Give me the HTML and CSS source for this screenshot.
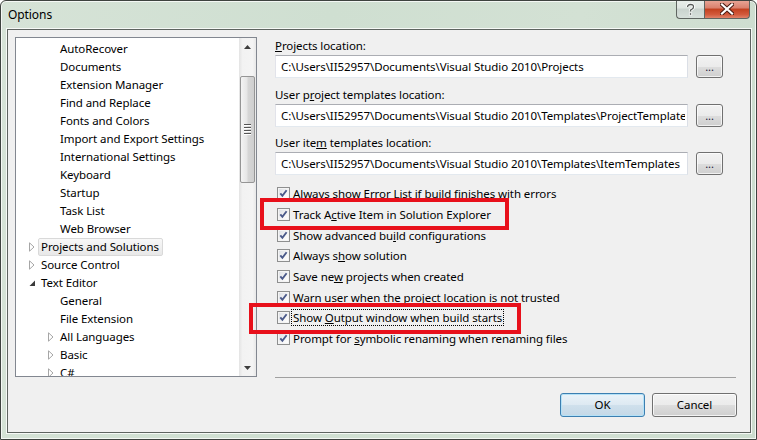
FILE: index.html
```html
<!DOCTYPE html>
<html>
<head>
<meta charset="utf-8">
<link rel="stylesheet" href="styles.css">
</head>
<body>
<div class="window">
  <div class="titlebar">
    <div class="title">Options</div>
    <div class="caption-btns">
      <div class="cap-help"><svg width="11" height="13" viewBox="0 0 11 13"><path d="M2.5 4 Q2.5 1.5 5.5 1.5 Q8.5 1.5 8.5 4 Q8.5 5.5 6.5 6.5 L5.5 7.2 L5.5 8.5" fill="none" stroke="#fff" stroke-width="3"/><path d="M2.5 4 Q2.5 1.5 5.5 1.5 Q8.5 1.5 8.5 4 Q8.5 5.5 6.5 6.5 L5.5 7.2 L5.5 8.5" fill="none" stroke="#555a57" stroke-width="1.3"/><rect x="4.3" y="9.8" width="2.4" height="2.4" fill="#555a57" stroke="#fff" stroke-width="0.8"/></svg></div>
      <div class="cap-close"><svg width="14" height="12" viewBox="0 0 14 12"><path d="M2 1.5 L12 10.5 M12 1.5 L2 10.5" stroke="#4a1b12" stroke-width="4.2" stroke-linecap="square"/><path d="M2 1.5 L12 10.5 M12 1.5 L2 10.5" stroke="#fff" stroke-width="2.2" stroke-linecap="square"/></svg></div>
    </div>
  </div>
  <div class="client">
    <div class="main">
      <div class="tree">
        <div class="tree-items">
          <div class="node l1"><span class="exp"></span><span class="lbl">AutoRecover</span></div>
          <div class="node l1"><span class="exp"></span><span class="lbl">Documents</span></div>
          <div class="node l1"><span class="exp"></span><span class="lbl">Extension Manager</span></div>
          <div class="node l1"><span class="exp"></span><span class="lbl">Find and Replace</span></div>
          <div class="node l1"><span class="exp"></span><span class="lbl">Fonts and Colors</span></div>
          <div class="node l1"><span class="exp"></span><span class="lbl">Import and Export Settings</span></div>
          <div class="node l1"><span class="exp"></span><span class="lbl">International Settings</span></div>
          <div class="node l1"><span class="exp"></span><span class="lbl">Keyboard</span></div>
          <div class="node l1"><span class="exp"></span><span class="lbl">Startup</span></div>
          <div class="node l1"><span class="exp"></span><span class="lbl">Task List</span></div>
          <div class="node l1"><span class="exp"></span><span class="lbl">Web Browser</span></div>
          <div class="node l0"><span class="exp"><svg width="6" height="10" viewBox="0 0 6 10"><path d="M0.5 0.8 L5 5 L0.5 9.2 Z" fill="#fff" stroke="#a6a6a6" stroke-width="1"/></svg></span><span class="lbl sel">Projects and Solutions</span></div>
          <div class="node l0"><span class="exp"><svg width="6" height="10" viewBox="0 0 6 10"><path d="M0.5 0.8 L5 5 L0.5 9.2 Z" fill="#fff" stroke="#a6a6a6" stroke-width="1"/></svg></span><span class="lbl">Source Control</span></div>
          <div class="node l0"><span class="exp"><svg width="7" height="7" viewBox="0 0 7 7"><path d="M6 0.5 L6 6 L0.5 6 Z" fill="#3a3a3a"/></svg></span><span class="lbl">Text Editor</span></div>
          <div class="node l1"><span class="exp"></span><span class="lbl">General</span></div>
          <div class="node l1"><span class="exp"></span><span class="lbl">File Extension</span></div>
          <div class="node l1"><span class="exp"><svg width="6" height="10" viewBox="0 0 6 10"><path d="M0.5 0.8 L5 5 L0.5 9.2 Z" fill="#fff" stroke="#a6a6a6" stroke-width="1"/></svg></span><span class="lbl">All Languages</span></div>
          <div class="node l1"><span class="exp"><svg width="6" height="10" viewBox="0 0 6 10"><path d="M0.5 0.8 L5 5 L0.5 9.2 Z" fill="#fff" stroke="#a6a6a6" stroke-width="1"/></svg></span><span class="lbl">Basic</span></div>
          <div class="node l1"><span class="exp"><svg width="6" height="10" viewBox="0 0 6 10"><path d="M0.5 0.8 L5 5 L0.5 9.2 Z" fill="#fff" stroke="#a6a6a6" stroke-width="1"/></svg></span><span class="lbl">C#</span></div>
        </div>
        <div class="vscroll">
          <div class="sb-btn"><svg width="7" height="4" viewBox="0 0 7 4"><path d="M3.5 0 L7 4 L0 4 Z" fill="#3d3d3d"/></svg></div>
          <div class="sb-track">
            <div class="sb-thumb"><div class="grip"><i></i><i></i><i></i><i></i></div></div>
          </div>
          <div class="sb-btn"><svg width="7" height="4" viewBox="0 0 7 4"><path d="M0 0 L7 0 L3.5 4 Z" fill="#3d3d3d"/></svg></div>
        </div>
      </div>
      <div class="panel">
        <div class="field">
          <div class="flabel"><u>P</u>rojects location:</div>
          <div class="frow"><div class="textbox"><span class="tbtext">C:\Users\II52957\Documents\Visual Studio 2010\Projects</span></div><div class="browse">...</div></div>
        </div>
        <div class="field">
          <div class="flabel">User p<u>r</u>oject templates location:</div>
          <div class="frow"><div class="textbox"><span class="tbtext">C:\Users\II52957\Documents\Visual Studio 2010\Templates\ProjectTemplates</span></div><div class="browse">...</div></div>
        </div>
        <div class="field">
          <div class="flabel">User ite<u>m</u> templates location:</div>
          <div class="frow"><div class="textbox"><span class="tbtext">C:\Users\II52957\Documents\Visual Studio 2010\Templates\ItemTemplates</span></div><div class="browse">...</div></div>
        </div>
        <div class="checks">
          <div class="chk"><span class="box"></span><span class="ctext">Always show <u>E</u>rror List if build finishes with errors</span></div>
          <div class="chk"><span class="box"></span><span class="ctext">Track A<u>c</u>tive Item in Solution Explorer</span></div>
          <div class="chk"><span class="box"></span><span class="ctext">Show advanced bu<u>i</u>ld configurations</span></div>
          <div class="chk"><span class="box"></span><span class="ctext">Always s<u>h</u>ow solution</span></div>
          <div class="chk"><span class="box"></span><span class="ctext">Save ne<u>w</u> projects when created</span></div>
          <div class="chk"><span class="box"></span><span class="ctext">Warn user when the project location is not trusted</span></div>
          <div class="chk"><span class="box"></span><span class="ctext focus">Show <u>O</u>utput window when build starts</span></div>
          <div class="chk"><span class="box"></span><span class="ctext">Prompt for <u>s</u>ymbolic renaming when renaming files</span></div>
        </div>
      </div>
    </div>
    <div class="footer">
      <div class="btn default">OK</div>
      <div class="btn">Cancel</div>
    </div>
  </div>
  <div class="mark mark1"></div>
  <div class="mark mark2"></div>
</div>
</body>
</html>
```
FILE: styles.css
```css
html, body {
  margin: 0;
  padding: 0;
  background: #fff;
}
body {
  font-family: "Noto Sans", "Open Sans", sans-serif;
  font-size: 11.5px;
  letter-spacing: -0.08px;
  color: #000;
}
.window {
  position: relative;
  width: 757px;
  height: 440px;
  box-sizing: border-box;
  border: 1px solid #3e433f;
  border-radius: 6px 6px 0 0;
  background: linear-gradient(100deg, #d6e3d7 0%, #cfdfd1 40%, #d3e1d4 70%, #ccdcce 100%);
  box-shadow: inset 0 0 0 1px rgba(255,255,255,0.75);
  display: flex;
  flex-direction: column;
  overflow: hidden;
}
.titlebar {
  height: 28px;
  display: flex;
  align-items: flex-start;
  flex-shrink: 0;
}
.title {
  padding: 6px 0 0 7px;
  font-size: 12px;
  line-height: 16px;
  color: #000;
}
.caption-btns {
  margin-left: auto;
  margin-right: 6px;
  margin-top: -1px;
  display: flex;
}
.cap-help, .cap-close {
  height: 19px;
  box-sizing: border-box;
  display: flex;
  align-items: center;
  justify-content: center;
  border: 1px solid #5f6561;
  border-top: none;
}
.cap-help {
  width: 28px;
  border-radius: 0 0 0 4px;
  background: linear-gradient(#e9efeb, #dde5e0 45%, #c9d3ce 50%, #d7e0db);
  border-right: none;
}
.cap-close {
  width: 46px;
  border-radius: 0 0 4px 0;
  background: linear-gradient(#e9a899, #d9806d 45%, #c2401f 50%, #d2593b 80%, #e0826a);
}
.client {
  margin: 0 5px 6px 6px;
  height: 404px;
  box-sizing: border-box;
  border: 1px solid #5e6460;
  background: #f0f0f0;
  padding: 7px 0 0 7px;
  box-shadow: 0 0 0 1px rgba(255,255,255,0.8);
}
.main {
  display: flex;
  align-items: flex-start;
}
.tree {
  width: 242px;
  height: 340px;
  box-sizing: border-box;
  border: 1px solid #828790;
  background: #fff;
  display: flex;
  overflow: hidden;
}
.tree-items {
  flex: 1;
  padding-top: 2px;
  overflow: hidden;
}
.node {
  height: 18px;
  display: flex;
  align-items: center;
  white-space: nowrap;
}
.node.l0 { padding-left: 10px; }
.node.l1 { padding-left: 29px; }
.exp {
  width: 12px;
  height: 18px;
  display: flex;
  align-items: center;
  justify-content: center;
}
.lbl {
  line-height: 16px;
  padding: 0 3px 0 2px;
  border: 1px solid transparent;
}
.lbl.sel {
  border-color: #d9d9d9;
  border-radius: 2px;
  background: linear-gradient(#f8f8f8, #e8e8e8);
}
.vscroll {
  width: 17px;
  display: flex;
  flex-direction: column;
  background: linear-gradient(90deg, #e3e3e3, #f2f2f2 20%, #f4f4f4 80%, #e8e8e8);
}
.sb-btn {
  height: 17px;
  display: flex;
  align-items: center;
  justify-content: center;
}
.sb-track {
  flex: 1;
  padding-top: 21px;
}
.sb-thumb {
  margin: 0 1px;
  height: 107px;
  box-sizing: border-box;
  border: 1px solid #959595;
  border-radius: 2px;
  background: linear-gradient(90deg, #f4f4f4, #e6e6e6 45%, #d6d6d6 55%, #cfcfcf);
  display: flex;
  align-items: center;
  justify-content: center;
}
.grip {
  display: flex;
  flex-direction: column;
  gap: 1px;
}
.grip i {
  display: block;
  width: 7px;
  height: 1px;
  background: #555;
  border-bottom: 1px solid #fff;
}
.panel {
  margin-left: 18px;
  width: 461px;
  height: 341px;
  box-sizing: border-box;
  border-bottom: 1px solid #a0a0a0;
  padding-top: 1px;
}
.field {
  margin-bottom: 8.5px;
}
.flabel {
  line-height: 15px;
  margin-bottom: 2px;
  white-space: nowrap;
}
.frow {
  display: flex;
  align-items: flex-start;
}
.textbox {
  width: 413px;
  height: 23px;
  box-sizing: border-box;
  border: 1px solid;
  border-color: #abadb3 #dbdfe6 #e3e9ef #e2e3ea;
  background: #fff;
  padding-left: 5px;
  line-height: 21px;
  white-space: nowrap;
  overflow: hidden;
}
.tbtext {
  display: block;
  overflow: hidden;
  margin-right: 2px;
}
.browse {
  margin-left: 8px;
  width: 27px;
  height: 23px;
  box-sizing: border-box;
  border: 1px solid #707070;
  border-radius: 3px;
  background: linear-gradient(#f2f2f2, #ebebeb 50%, #dddddd 51%, #cfcfcf);
  box-shadow: inset 0 0 0 1px rgba(255,255,255,0.7);
  text-align: center;
  line-height: 22px;
  font-size: 11px;
  color: #1a1a3a;
}
.chk {
  height: 20.7px;
  display: flex;
  align-items: center;
  padding-left: 2px;
  white-space: nowrap;
}
.box {
  width: 13px;
  height: 13px;
  box-sizing: border-box;
  border: 1px solid #8e8f8f;
  background:
    url("data:image/svg+xml;utf8,<svg xmlns='http://www.w3.org/2000/svg' width='11' height='11' viewBox='0 0 11 11'><path d='M2.3 5.3 L4.4 7.8 L8.6 2.2' fill='none' stroke='%234b5a8a' stroke-width='1.9'/></svg>") center/11px 11px no-repeat,
    linear-gradient(135deg, #d9dde3, #f6f6f6 60%, #ffffff);
  box-shadow: inset 0 0 0 1px #f4f4f4;
  flex-shrink: 0;
}
.ctext {
  margin-left: 1px;
  line-height: 15px;
  padding: 0 1px;
  border: 1px solid transparent;
}
.ctext.focus {
  border: 1px dotted #000;
}
.footer {
  display: flex;
  justify-content: flex-end;
  padding: 15px 13px 0 0;
  gap: 7px;
}
.btn {
  width: 85px;
  height: 24px;
  box-sizing: border-box;
  border: 1px solid #707070;
  border-radius: 3px;
  background: linear-gradient(#f2f2f2, #ebebeb 50%, #dddddd 51%, #cfcfcf);
  box-shadow: inset 0 0 0 1px rgba(255,255,255,0.75);
  text-align: center;
  line-height: 22px;
  color: #000;
}
.btn.default {
  border-color: #3c7fb1;
  background: linear-gradient(#eaf3f9, #dde9f2 50%, #cfe0ec 51%, #c4d8e7);
  box-shadow: inset 0 0 0 1px #b4e1f7;
}
.mark {
  position: absolute;
  border: 4px solid #e8101b;
  box-sizing: border-box;
}
.mark1 {
  left: 259px;
  top: 197px;
  width: 249px;
  height: 32px;
}
.mark2 {
  left: 248px;
  top: 302px;
  width: 272px;
  height: 31px;
}
```
